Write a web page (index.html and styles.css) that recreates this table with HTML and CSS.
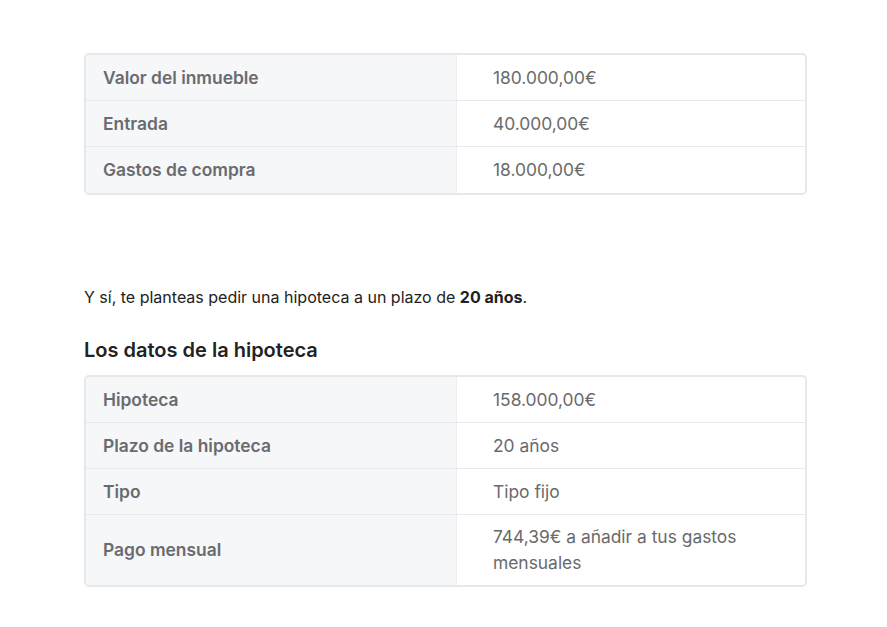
FILE: index.html
```html
<!DOCTYPE html>
<html lang="es">
<head>
    <meta charset="UTF-8">
    <meta name="viewport" content="width=device-width, initial-scale=1.0">
    <title>Los datos de la hipoteca</title>
    <link rel="stylesheet" href="styles.css">
</head>
<body>
    <div class="article">
        <table class="data-table">
            <tr>
                <th>Valor del inmueble</th>
                <td>180.000,00€</td>
            </tr>
            <tr>
                <th>Entrada</th>
                <td>40.000,00€</td>
            </tr>
            <tr>
                <th>Gastos de compra</th>
                <td>18.000,00€</td>
            </tr>
        </table>

        <p class="text">Y sí, te planteas pedir una hipoteca a un plazo de <strong>20 años</strong>.</p>

        <h3 class="section-title">Los datos de la hipoteca</h3>

        <table class="data-table">
            <tr>
                <th>Hipoteca</th>
                <td>158.000,00€</td>
            </tr>
            <tr>
                <th>Plazo de la hipoteca</th>
                <td>20 años</td>
            </tr>
            <tr>
                <th>Tipo</th>
                <td>Tipo fijo</td>
            </tr>
            <tr>
                <th>Pago mensual</th>
                <td>744,39€ a añadir a tus gastos mensuales</td>
            </tr>
        </table>
    </div>
</body>
</html>
```

FILE: styles.css
```css
* {
    margin: 0;
    padding: 0;
    box-sizing: border-box;
}

body {
    font-family: Inter, "Noto Sans", sans-serif;
    background: #fff;
    color: #222;
}

.article {
    width: 723px;
    margin: 0 0 0 84px;
    padding-top: 53px;
}

.data-table {
    width: 100%;
    border-collapse: separate;
    border-spacing: 0;
    border: 2px solid #e6e8eb;
    border-radius: 5px;
    overflow: hidden;
    font-size: 17.4px;
    line-height: 26px;
}

.data-table th,
.data-table td {
    text-align: left;
    vertical-align: middle;
    border-bottom: 1px solid #e8e9ec;
    height: 46px;
}

.data-table tr:last-child th,
.data-table tr:last-child td {
    border-bottom: none;
}

.data-table th {
    width: 371px;
    background: #f6f7f9;
    color: #696b6f;
    font-weight: 600;
    padding: 0 17px;
    border-right: 1px solid #eceef0;
}

.data-table td {
    color: #6a6a6a;
    font-weight: 400;
    padding: 0 36px;
}

.data-table tr:last-child td {
    padding-top: 9px;
    padding-bottom: 9px;
}

.text {
    margin-top: 90px;
    font-size: 16px;
    line-height: 24px;
    color: #222;
}

.text strong {
    font-weight: 700;
}

.section-title {
    margin-top: 27px;
    margin-bottom: 11px;
    font-size: 20px;
    line-height: 28px;
    font-weight: 600;
    color: #222;
}
```
